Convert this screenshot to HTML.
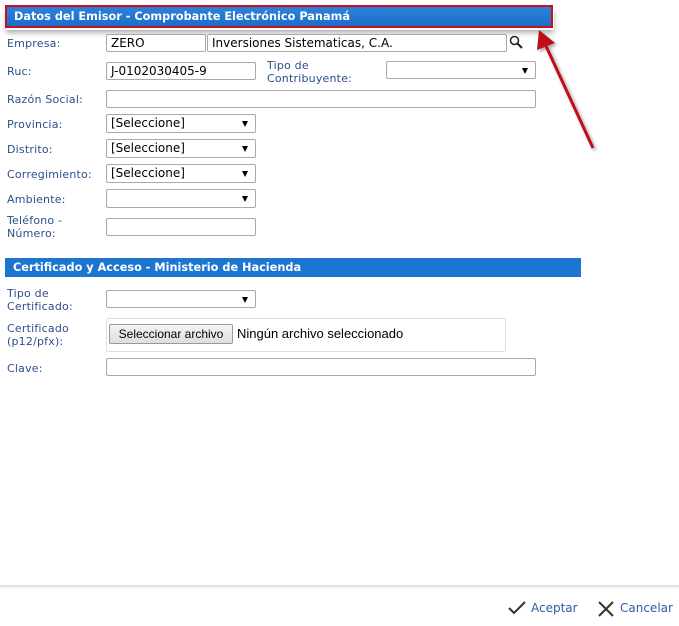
<!DOCTYPE html>
<html><head><meta charset="utf-8"><style>
body{margin:0;width:679px;height:626px;background:#fff;position:relative;overflow:hidden;font-family:"DejaVu Sans",Verdana,sans-serif;font-size:11px;}
.a{position:absolute}
.lbl{position:absolute;color:#2b4f8c;font-size:11px;line-height:13px;letter-spacing:0.2px}
.in{position:absolute;box-sizing:border-box;border:1px solid #a9a9a9;border-radius:2px;background:#fff;font-family:"DejaVu Sans",Verdana,sans-serif;font-size:12px;line-height:17px;padding-left:4px;color:#000}
.sel::after{content:"";position:absolute;right:7px;top:6px;border-left:3.5px solid transparent;border-right:3.5px solid transparent;border-top:6px solid #000}
.bar{position:absolute;color:#fff;font-weight:bold;font-size:11.3px;background:#1c75d0}
</style></head><body>
<div class="a" style="left:6px;top:8px;width:548px;height:22px;box-shadow:0 3px 5px rgba(0,0,0,0.3)"></div>
<div class="bar" style="left:5px;top:5px;height:19px;border:2px solid #c8101e;background:linear-gradient(#2f80d8,#1a6fc8);line-height:20px;padding-left:7px;box-sizing:content-box;width:537px">Datos del Emisor - Comprobante Electrónico Panamá</div>

<div class="lbl" style="left:7px;top:37px">Empresa:</div>
<div class="in" style="left:106px;top:34px;width:100px;height:18px">ZERO</div>
<div class="in" style="left:207px;top:34px;width:300px;height:18px">Inversiones Sistematicas, C.A.</div>
<svg class="a" style="left:509px;top:35px" width="15" height="15" viewBox="0 0 15 15"><circle cx="5.5" cy="5.5" r="4" fill="none" stroke="#222" stroke-width="1.5"/><line x1="8.5" y1="8.5" x2="13" y2="13" stroke="#222" stroke-width="2"/></svg>

<div class="lbl" style="left:7px;top:65px">Ruc:</div>
<div class="in" style="left:106px;top:62px;width:150px;height:18px">J-0102030405-9</div>
<div class="lbl" style="left:267px;top:59px">Tipo de<br>Contribuyente:</div>
<div class="in sel" style="left:386px;top:61px;width:150px;height:18px"></div>

<div class="lbl" style="left:7px;top:93px">Razón Social:</div>
<div class="in" style="left:106px;top:90px;width:430px;height:18px"></div>

<div class="lbl" style="left:7px;top:118px">Provincia:</div>
<div class="in sel" style="left:106px;top:114px;width:150px;height:19px">[Seleccione]</div>
<div class="lbl" style="left:7px;top:143px">Distrito:</div>
<div class="in sel" style="left:106px;top:139px;width:150px;height:19px">[Seleccione]</div>
<div class="lbl" style="left:7px;top:168px">Corregimiento:</div>
<div class="in sel" style="left:106px;top:164px;width:150px;height:19px">[Seleccione]</div>
<div class="lbl" style="left:7px;top:193px">Ambiente:</div>
<div class="in sel" style="left:106px;top:189px;width:150px;height:19px"></div>
<div class="lbl" style="left:7px;top:214px">Teléfono -<br>Número:</div>
<div class="in" style="left:106px;top:218px;width:150px;height:18px"></div>

<div class="bar" style="left:5px;top:258px;width:568px;height:19px;line-height:20px;padding-left:8px">Certificado y Acceso - Ministerio de Hacienda</div>

<div class="lbl" style="left:7px;top:287px">Tipo de<br>Certificado:</div>
<div class="in sel" style="left:106px;top:290px;width:150px;height:18px"></div>
<div class="lbl" style="left:7px;top:322px">Certificado<br>(p12/pfx):</div>
<div class="in" style="left:106px;top:318px;width:400px;height:34px;border-color:#ddd"></div>
<div class="a" style="left:109px;top:324px;width:124px;height:20px;box-sizing:border-box;border:1px solid #999;border-radius:2px;background:linear-gradient(#f4f4f4,#dedede);font-family:'Liberation Sans',Arial,sans-serif;font-size:12px;line-height:18px;text-align:center">Seleccionar archivo</div>
<div class="a" style="left:237px;top:326px;font-family:'Liberation Sans',Arial,sans-serif;font-size:13px">Ningún archivo seleccionado</div>
<div class="lbl" style="left:7px;top:362px">Clave:</div>
<div class="in" style="left:106px;top:358px;width:430px;height:18px"></div>

<svg class="a" style="left:0;top:0" width="679" height="626">
<defs><filter id="s"><feDropShadow dx="2" dy="2" stdDeviation="1.5" flood-opacity="0.35"/></filter></defs>
<g filter="url(#s)"><line x1="593" y1="148" x2="546" y2="46" stroke="#c0101a" stroke-width="3"/><polygon points="539,30 537,50 555,43" fill="#c0101a"/></g>
</svg>

<div class="a" style="left:0;top:585px;width:679px;height:4px;background:linear-gradient(#d8d8d8,#fff)"></div>
<svg class="a" style="left:507px;top:600px" width="20" height="16"><polyline points="2,8 7,13 18,2" fill="none" stroke="#333" stroke-width="2"/></svg>
<div class="a" style="left:531px;top:601px;color:#2b5ea8;font-size:12px">Aceptar</div>
<svg class="a" style="left:597px;top:600px" width="18" height="18"><path d="M2,2 L16,16 M16,2 L2,16" stroke="#333" stroke-width="2"/></svg>
<div class="a" style="left:620px;top:601px;color:#2b5ea8;font-size:12px">Cancelar</div>
</body></html>
